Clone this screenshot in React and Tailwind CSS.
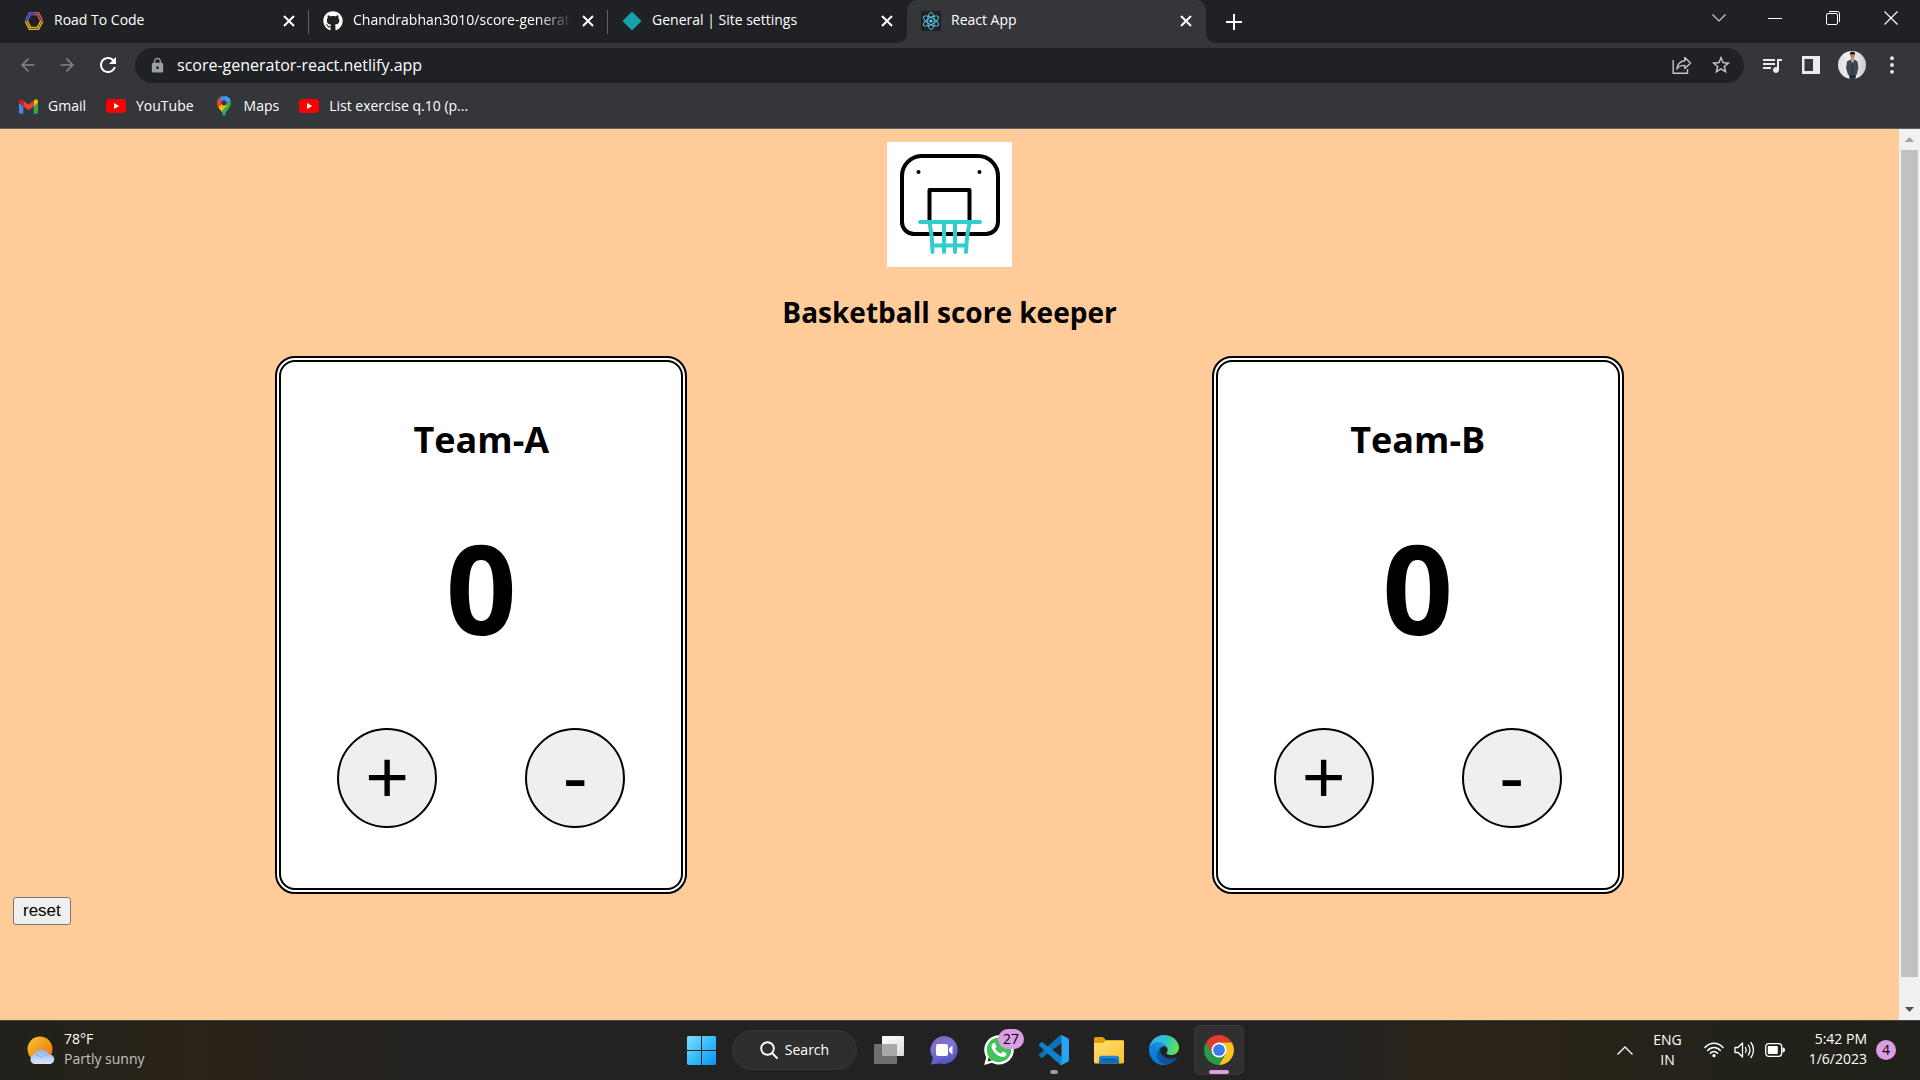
import { useState } from "react";
import { FaGithub, FaWhatsapp } from "react-icons/fa";
import { MdLock, MdRefresh, MdStarBorder, MdQueueMusic } from "react-icons/md";
import { ArrowLeft, ArrowRight } from "lucide-react";

/* ---------- site icons ---------- */

function HexagonIcon() {
  return (
    <svg viewBox="0 0 20 20" className="h-5 w-5" fill="none" strokeWidth="3.4">
      <path d="M2.2 10 6 2.6h6" stroke="#6a5acd" />
      <path d="M11 2.6h3L17.8 10" stroke="#e05a5a" />
      <path d="M17.8 10 14 17.4H6L2.2 10" stroke="#e8b52c" />
      <path d="M2.2 10 6 2.6h8L17.8 10 14 17.4H6z" stroke="#202124" strokeWidth="0.7" />
    </svg>
  );
}

function DiamondIcon() {
  return (
    <svg viewBox="0 0 20 20" className="h-5 w-5">
      <path d="M10 .5 19.5 10 10 19.5.5 10z" fill="#15a0ae" />
    </svg>
  );
}

function ReactIcon() {
  return (
    <svg viewBox="0 0 20 20" className="h-5 w-5" fill="none" stroke="#5fd3f3" strokeWidth="0.9">
      <rect width="20" height="20" rx="1.5" fill="#202124" stroke="none" />
      <ellipse cx="10" cy="10" rx="3.3" ry="8.6" />
      <ellipse cx="10" cy="10" rx="3.3" ry="8.6" transform="rotate(60 10 10)" />
      <ellipse cx="10" cy="10" rx="3.3" ry="8.6" transform="rotate(120 10 10)" />
      <circle cx="10" cy="10" r="1.6" fill="#5fd3f3" stroke="none" />
    </svg>
  );
}

function GmailIcon() {
  return (
    <svg viewBox="52 42 88 66" className="h-[15px] w-[19px]">
      <path fill="#4285f4" d="M58 108h14V74L52 59v43c0 3.32 2.69 6 6 6" />
      <path fill="#34a853" d="M120 108h14c3.32 0 6-2.69 6-6V59l-20 15" />
      <path fill="#fbbc04" d="M120 48v26l20-15v-8c0-7.42-8.47-11.65-14.4-7.2" />
      <path fill="#ea4335" d="M72 74V48l24 18 24-18v26L96 92" />
      <path fill="#c5221f" d="M52 51v8l20 15V48l-5.6-4.2c-5.94-4.45-14.4-.22-14.4 7.2" />
    </svg>
  );
}

function YouTubeIcon() {
  return (
    <svg viewBox="0 0 20 14" className="h-[14px] w-5">
      <rect width="20" height="14" rx="3.5" fill="#f00" />
      <path d="M8 4v6l5.2-3z" fill="#fff" />
    </svg>
  );
}

function MapsIcon() {
  return (
    <svg viewBox="-3 0 20 20" className="h-5 w-5">
      <defs>
        <clipPath id="pin">
          <path d="M7 0a7 7 0 0 1 7 7c0 5-4.6 6.600-5.800 11.600C8 19.600 7.600 20 7 20s-1-.4-1.200-1.400C4.600 13.600 0 12 0 7a7 7 0 0 1 7-7z" />
        </clipPath>
      </defs>
      <g clipPath="url(#pin)">
        <rect width="14" height="20" fill="#34a853" />
        <path d="M0 0h14v3L7 10 1.500 3z" fill="#4285f4" />
        <path d="M9 0h5v4L9.500 5z" fill="#4aa3f6" />
        <path d="M-1 1.500h3L7 6l-6 6.500-3-3z" fill="#ea4335" />
        <path d="M1 12.200 7 5.500l3 4-6.500 7z" fill="#fbbc04" />
      </g>
      <circle cx="7" cy="7" r="2.500" fill="#35363a" />
    </svg>
  );
}

function CloseIcon() {
  return (
    <svg viewBox="0 0 12 12" className="h-3 w-3" stroke="currentColor" strokeWidth="2">
      <path d="M1 1l10 10M11 1 1 11" />
    </svg>
  );
}

function ShareIcon() {
  return (
    <svg viewBox="0 0 20 20" className="h-5 w-5" fill="none" stroke="currentColor" strokeWidth="1.4">
      <path d="M1.200 5v13.300h14.300V14" />
      <path d="M12.800 2.500 18.500 8l-5.700 5.500V10.400C9 10.300 6.500 11.500 4.800 14 5.300 9.500 8 6.200 12.800 5.700z" strokeLinejoin="round" />
    </svg>
  );
}

function SidePanelIcon() {
  return (
    <svg viewBox="0 0 18 18" className="h-[18px] w-[18px]">
      <path fill="currentColor" fillRule="evenodd" d="M0 0h18v18H0zM2.500 3v12H11V3z" />
    </svg>
  );
}

function Avatar() {
  return (
    <svg viewBox="0 0 28 28" className="h-7 w-7">
      <defs>
        <clipPath id="face"><circle cx="14" cy="14" r="14" /></clipPath>
        <linearGradient id="wall"><stop stopColor="#e4dce4" /><stop offset="0.5" stopColor="#f6f0f6" /><stop offset="1" stopColor="#cfc4cf" /></linearGradient>
      </defs>
      <g clipPath="url(#face)">
        <rect width="28" height="28" fill="url(#wall)" />
        <path d="M11 23h7l-.5 6h-6z" fill="#26262c" />
        <path d="M9 10.500 12.500 8.500h4L19.500 10.500 20.500 17 19 22.500 18.500 24h-8.500L9.500 22 8 17z" fill="#3d4852" />
        <path d="M12.800 8.500h3.400L14.600 14z" fill="#b9b4a8" />
        <path d="M14.300 11v12" stroke="#20262c" strokeWidth="0.800" />
        <ellipse cx="14.500" cy="5.200" rx="2" ry="2.900" fill="#bb8466" />
        <path d="M12.200 5C11.500 1 13 .8 14.500.8s3.200.4 2.500 4.200L16.500 3.200h-3.700z" fill="#17130f" />
      </g>
    </svg>
  );
}

/* ---------- taskbar icons ---------- */

function WeatherIcon() {
  return (
    <svg viewBox="0 0 28 28" className="h-7 w-7">
      <defs>
        <linearGradient id="sun" x1="0" y1="0" x2="1" y2="1"><stop stopColor="#f7c62f" /><stop offset="1" stopColor="#ef6c0c" /></linearGradient>
        <linearGradient id="cloud" x1="0" y1="0" x2="0" y2="1"><stop stopColor="#8fb4ee" /><stop offset="1" stopColor="#dbe6fa" /></linearGradient>
      </defs>
      <circle cx="13" cy="13" r="12.500" fill="url(#sun)" />
      <path d="M7.500 28a4.800 4.800 0 0 1-.3-9.400 8 8 0 0 1 14.800 0A4.700 4.700 0 0 1 23 28z" fill="url(#cloud)" />
      <path d="M8 19c3 0 5 1 6 3M14 22c1.500-2.400 4-3.500 8-3.300" fill="none" stroke="#7fa5e6" strokeWidth="0.800" />
    </svg>
  );
}

function WindowsIcon() {
  return (
    <svg viewBox="0 0 29 29" className="h-[29px] w-[29px]">
      <defs>
        <linearGradient id="win" x1="0" y1="0" x2="29" y2="29" gradientUnits="userSpaceOnUse"><stop stopColor="#7fe0ff" /><stop offset="0.500" stopColor="#38bdf8" /><stop offset="1" stopColor="#0a93f5" /></linearGradient>
      </defs>
      <path d="M1 0h13v14H0V1zM15 0h13l1 1v13H15zM0 15h14v14H1l-1-1zM15 15h14v13l-1 1H15z" fill="url(#win)" />
    </svg>
  );
}

function SearchIcon() {
  return (
    <svg viewBox="0 0 18 18" className="h-[18px] w-[18px]" fill="none" stroke="#fff" strokeWidth="1.900">
      <circle cx="7.500" cy="7.500" r="6.300" />
      <path d="m12 12 5 5" strokeLinecap="round" />
    </svg>
  );
}

function TaskViewIcon() {
  return (
    <svg viewBox="0 0 30 28" className="h-7 w-[30px]">
      <defs>
        <linearGradient id="pane" x1="0" y1="0" x2="1" y2="1"><stop stopColor="#fff" /><stop offset="1" stopColor="#dcdcdc" /></linearGradient>
      </defs>
      <rect x="8" y="0" width="22" height="20" rx="1" fill="url(#pane)" />
      <rect x="0" y="8" width="23" height="20" rx="1" fill="#6e6e6e" />
      <path d="M8 8h15v12H9l-1-1z" fill="#a9a9a9" />
    </svg>
  );
}

function ChatIcon() {
  return (
    <svg viewBox="0 0 29 29" className="h-[29px] w-[29px]">
      <defs>
        <linearGradient id="chat" x1="0.200" y1="0" x2="0.600" y2="1"><stop stopColor="#8a62b5" /><stop offset="0.400" stopColor="#7a76d0" /><stop offset="1" stopColor="#5250c4" /></linearGradient>
      </defs>
      <path d="M14.500 0A14 14 0 1 1 10 27.500L.8 28.500 3 22A14 14 0 0 1 14.500 0z" fill="url(#chat)" />
      <rect x="6" y="8" width="12" height="12" rx="2" fill="#fff" />
      <path d="m19 12.500 3.500-3v9l-3.500-3z" fill="#fff" />
    </svg>
  );
}

function VsCodeIcon() {
  return (
    <svg viewBox="0 0 100 100" className="h-[30px] w-[30px]">
      <path fill="#0f70b8" d="M96.460 10.800 75.860.870a6.230 6.230 0 0 0-7.100 1.200L1.300 63.580a4.170 4.170 0 0 0 0 6.170l5.510 5a4.170 4.170 0 0 0 5.320.240L93.360 13.400c2.730-2.070 6.640-.130 6.640 3.300v-.240a6.250 6.250 0 0 0-3.540-5.660z" />
      <path fill="#0d82cc" d="m96.460 89.170-20.600 9.920a6.230 6.230 0 0 1-7.100-1.200L1.300 36.380a4.170 4.170 0 0 1 0-6.170l5.510-5a4.170 4.170 0 0 1 5.320-.240L93.360 86.600c2.730 2.070 6.640.130 6.640-3.300v.240a6.250 6.250 0 0 1-3.540 5.630z" />
      <path fill="#2aa3f2" d="M75.860 99.130a6.230 6.230 0 0 1-7.110-1.210c2.310 2.310 6.250.670 6.250-2.590V4.670c0-3.260-3.940-4.890-6.250-2.590a6.230 6.230 0 0 1 7.110-1.210l20.600 9.910A6.250 6.250 0 0 1 100 16.410v67.180a6.250 6.250 0 0 1-3.540 5.630z" />
    </svg>
  );
}

function FolderIcon() {
  return (
    <svg viewBox="0 0 30 27" className="h-[27px] w-[30px]">
      <defs>
        <linearGradient id="folder" x1="0" y1="0" x2="1" y2="1"><stop stopColor="#ffdf76" /><stop offset="1" stopColor="#fbc02a" /></linearGradient>
        <linearGradient id="tray" x1="0" y1="0" x2="0" y2="1"><stop stopColor="#1b90e0" /><stop offset="1" stopColor="#0c62ac" /></linearGradient>
      </defs>
      <path d="M0 1.500A1.500 1.500 0 0 1 1.500 0H9l3 3h16.500A1.500 1.500 0 0 1 30 4.500V9H0z" fill="#e0a106" />
      <path d="M0 6h9l3-2.200h18V25a1.500 1.500 0 0 1-1.500 1.500h-27A1.500 1.500 0 0 1 0 25z" fill="url(#folder)" />
      <path d="M5 26.500V21a2.200 2.200 0 0 1 2.200-2.200h15.600A2.200 2.200 0 0 1 25 21v5.500z" fill="url(#tray)" />
      <path d="M8.500 22.500h13" stroke="#0a4b8a" strokeWidth="1.200" />
    </svg>
  );
}

function EdgeIcon() {
  return (
    <svg viewBox="0 0 256 256" className="h-[30px] w-[30px]">
      <defs>
        <linearGradient id="edgeA" x1="0.200" y1="0.500" x2="1" y2="0.500"><stop stopColor="#0c59a4" /><stop offset="1" stopColor="#114a8b" /></linearGradient>
        <linearGradient id="edgeB" x1="0.800" y1="0" x2="0.300" y2="1"><stop stopColor="#1b9de2" /><stop offset="0.500" stopColor="#0c86da" /><stop offset="1" stopColor="#0078d4" /></linearGradient>
        <linearGradient id="edgeC" x1="0" y1="0.300" x2="1" y2="0.600"><stop stopColor="#35b1e8" /><stop offset="0.500" stopColor="#2fc2cf" /><stop offset="1" stopColor="#62e24e" /></linearGradient>
      </defs>
      <path fill="url(#edgeA)" d="M231 190.500c-3.400 1.800-6.900 3.400-10.500 4.700-11.500 4.300-23.600 6.500-35.900 6.500-47.300 0-88.500-32.500-88.500-74.300.1-11.400 6.400-21.900 16.400-27.300-42.800 1.800-53.800 46.400-53.800 72.500 0 73.900 68.100 81.400 82.800 81.400 7.900 0 19.800-2.300 27-4.600l1.300-.4c27.600-9.500 51-28.100 66.600-52.800 1.200-1.900.6-4.300-1.200-5.500-1.300-.8-2.900-.9-4.200-.2z" />
      <path fill="url(#edgeB)" d="M105.700 241.400c-8.900-5.500-16.600-12.800-22.700-21.300-26.300-36-18.400-86.500 17.600-112.800 3.800-2.700 7.700-5.200 11.900-7.200 3.100-1.500 8.400-4.100 15.500-4 10.100.1 19.600 4.900 25.700 13 4 5.400 6.300 11.900 6.400 18.700 0-.2 24.500-79.600-80-79.600-43.900 0-80 41.700-80 78.200-.2 19.300 4 38.500 12.100 56 27.600 58.800 94.800 87.600 156.400 67.100-21.100 6.600-44.100 3.700-62.900-8.100z" />
      <path fill="url(#edgeC)" d="M152.300 148.900c-.8 1-3.300 2.500-3.300 5.700 0 2.600 1.700 5.100 4.700 7.200 14.400 10 41.500 8.700 41.600 8.700 10.700 0 21.100-2.900 30.300-8.300 18.800-11 30.400-31.100 30.400-52.900.3-22.400-8-37.300-11.300-43.900C223.500 23.900 177.700 0 128 0 58 0 1 56.200 0 126.200c.5-36.500 36.800-66 80-66 3.500 0 23.500.3 42 10.100 16.300 8.600 24.900 18.900 30.800 29.200 6.200 10.700 7.300 24.100 7.300 29.500 0 5.300-2.700 13.300-7.800 19.900z" />
    </svg>
  );
}

function ChromeIcon() {
  return (
    <svg viewBox="-22 -22 44 44" className="h-[30px] w-[30px]">
      <path fill="#e33b2e" d="M-19.050-11A22 22 0 0 1 19.050-11H0L-9.530 5.500z" />
      <path fill="#fcc31e" d="M19.050-11A22 22 0 0 1 0 22L9.530 5.500 0-11z" />
      <path fill="#2a9a47" d="M0 22A22 22 0 0 1-19.050-11L-9.530 5.500H9.530z" />
      <circle r="11" fill="#fff" />
      <circle r="8.600" fill="#3b7ded" />
    </svg>
  );
}

function WifiIcon() {
  return (
    <svg viewBox="0 0 20 16" className="h-4 w-5" fill="none" stroke="#fff" strokeWidth="1.500" strokeLinecap="round">
      <path d="M1 5.500C6-.3 14-.3 19 5.500M3.700 8.500c3.500-4 9.100-4 12.600 0M6.400 11.300c2-2.400 5.200-2.400 7.200 0" />
      <circle cx="10" cy="13.700" r="1.600" fill="#fff" stroke="none" />
    </svg>
  );
}

function VolumeIcon() {
  return (
    <svg viewBox="0 0 21 18" className="h-[18px] w-[21px]" fill="none" stroke="#fff" strokeWidth="1.300" strokeLinecap="round" strokeLinejoin="round">
      <path d="M1 6.500h3L8.500 2v14L4 11.500H1z" />
      <path d="M11.500 6.500c1 1.600 1 3.400 0 5M14.300 4c2 3 2 7 0 10M17 1.500c3.300 4.500 3.300 10.500 0 15" />
    </svg>
  );
}

function BatteryIcon() {
  return (
    <svg viewBox="0 0 20 14" className="h-[14px] w-5">
      <rect x="0.700" y="0.700" width="16" height="12.600" rx="3" fill="none" stroke="#fff" strokeWidth="1.300" />
      <rect x="2.800" y="3" width="10" height="8" rx="1" fill="#fff" />
      <path d="M17.500 4.500c2 .3 2.500 1.200 2.500 2.500s-.5 2.200-2.500 2.500z" fill="#fff" />
    </svg>
  );
}

/* ---------- browser window ---------- */

const tabs = [
  { title: "Road To Code", icon: <HexagonIcon /> },
  { title: "Chandrabhan3010/score-generat", icon: <FaGithub className="h-5 w-5 text-white" />, fade: true },
  { title: "General | Site settings", icon: <DiamondIcon /> },
  { title: "React App", icon: <ReactIcon />, active: true },
];

function Flare({ className }) {
  return (
    <svg viewBox="0 0 10 10" className={`absolute bottom-0 h-[10px] w-[10px] ${className}`} fill="#35363a">
      <path d="M10 0v10H0A10 10 0 0 0 10 0z" />
    </svg>
  );
}

function Tab({ title, icon, fade, active, divider }) {
  return (
    <div
      className={`relative flex h-[43px] min-w-0 max-w-[299px] flex-1 items-center gap-[10px] pb-px pl-[14px] pr-[14px] text-white ${
        active ? "rounded-t-[10px] bg-[#35363a]" : ""
      }`}
    >
      {active && <Flare className="-left-[10px]" />}
      {active && <Flare className="-right-[10px] -scale-x-100" />}
      <span className="shrink-0">{icon}</span>
      <button
        className={`min-w-0 flex-1 overflow-hidden whitespace-nowrap pb-0.5 text-left text-[14px] leading-5 ${
          fade ? "[mask-image:linear-gradient(to_right,black_85%,transparent)]" : ""
        }`}
      >
        {title}
      </button>
      <button aria-label={`Close ${title}`} className="shrink-0">
        <CloseIcon />
      </button>
      {divider && <span className="absolute right-0 top-[10px] h-6 w-px bg-[#5f6368]" />}
    </div>
  );
}

function TabStrip() {
  return (
    <div className="flex h-[43px] bg-[#202124] pl-[10px] text-white">
      <div className="flex min-w-0 flex-1">
        {tabs.map((tab, i) => (
          <Tab key={tab.title} {...tab} divider={i < 2} />
        ))}
        <button aria-label="New tab" className="ml-5 shrink-0">
          <svg viewBox="0 0 16 16" className="h-4 w-4" stroke="currentColor" strokeWidth="2">
            <path d="M8 0v16M0 8h16" />
          </svg>
        </button>
      </div>
      <div className="flex h-9 shrink-0 items-center">
        <button aria-label="Search tabs" className="flex w-[54px] justify-center">
          <svg viewBox="0 0 14 8" className="h-2 w-[14px]" fill="none" stroke="#ccc" strokeWidth="1.200">
            <path d="m.5.5 6.500 6.500L13.500.5" />
          </svg>
        </button>
        <button aria-label="Minimize" className="flex w-[58px] justify-center">
          <svg viewBox="0 0 14 14" className="h-[14px] w-[14px]" stroke="#fff">
            <path d="M0 7.500h14" />
          </svg>
        </button>
        <button aria-label="Restore" className="flex w-[58px] justify-center">
          <svg viewBox="0 0 14 14" className="h-[14px] w-[14px]" fill="none" stroke="#fff">
            <rect x="0.500" y="2.500" width="11" height="11" rx="1.500" />
            <path d="M3 .5h8.500a2 2 0 0 1 2 2V11" />
          </svg>
        </button>
        <button aria-label="Close window" className="flex w-[58px] justify-center">
          <svg viewBox="0 0 14 14" className="h-[14px] w-[14px]" stroke="#fff" strokeWidth="1.200">
            <path d="m.5.5 13 13M13.500.5l-13 13" />
          </svg>
        </button>
      </div>
    </div>
  );
}

function Toolbar() {
  return (
    <div className="flex h-11 items-center bg-[#35363a] pr-5">
      <div className="flex w-[135px] items-center gap-[19px] pl-[18px] text-[#85868a]">
        <button aria-label="Back"><ArrowLeft className="h-5 w-5" strokeWidth={1.9} /></button>
        <button aria-label="Forward"><ArrowRight className="h-5 w-5" strokeWidth={1.9} /></button>
        <button aria-label="Reload" className="text-white"><MdRefresh className="h-6 w-6" /></button>
      </div>
      <div className="flex h-[35px] flex-1 items-center rounded-full bg-[#202124] pl-[14px] pr-3 text-[#c4c5c8]">
        <MdLock className="h-[17px] w-[17px] text-[#9aa0a6]" />
        <input
          aria-label="Address"
          className="ml-[11px] min-w-0 flex-1 bg-transparent text-[16px] leading-6 text-white outline-none"
          defaultValue="score-generator-react.netlify.app"
        />
        <button aria-label="Share"><ShareIcon /></button>
        <button aria-label="Bookmark this page" className="ml-[18px]"><MdStarBorder className="h-[22px] w-[22px]" /></button>
      </div>
      <div className="flex items-center gap-[18px] pl-4 text-[#eaeaec]">
        <button aria-label="Media controls"><MdQueueMusic className="h-6 w-6" /></button>
        <button aria-label="Side panel"><SidePanelIcon /></button>
        <button aria-label="Profile"><Avatar /></button>
        <button aria-label="Menu" className="px-[6px]">
          <svg viewBox="0 0 4 18" className="h-[18px] w-1" fill="currentColor">
            <circle cx="2" cy="2.200" r="1.900" /><circle cx="2" cy="9" r="1.900" /><circle cx="2" cy="15.800" r="1.900" />
          </svg>
        </button>
      </div>
    </div>
  );
}

function Bookmarks() {
  const item = "flex items-center gap-[10px]";
  return (
    <nav className="flex h-[42px] items-center gap-5 border-b border-[#5f6064] bg-[#35363a] pb-[3px] pl-[19px] text-[14px] leading-5 text-white">
      <a href="#gmail" className={item}><GmailIcon />Gmail</a>
      <a href="#youtube" className={item}><YouTubeIcon />YouTube</a>
      <a href="#maps" className={item}><MapsIcon />Maps</a>
      <a href="#list" className={item}><YouTubeIcon />List exercise q.10 (p...</a>
    </nav>
  );
}

/* ---------- page ---------- */

function HoopLogo() {
  return (
    <svg viewBox="0 0 125 125" className="h-[125px] w-[125px] bg-white" fill="none" strokeWidth="4" strokeLinecap="round" strokeLinejoin="round">
      <path stroke="#000" d="M34 14h57a20 20 0 0 1 20 20v46a12 12 0 0 1-12 12H27a12 12 0 0 1-12-12V34a20 20 0 0 1 19-20z" />
      <path stroke="#000" d="M42.500 78V48h40v30" />
      <circle cx="31.500" cy="30" r="2" fill="#000" />
      <circle cx="92.500" cy="30" r="2" fill="#000" />
      <path stroke="#32cdcd" d="M33 80h60M42.500 80c2 10 3 18 3 30M83 80c-3 10-3.500 18-4 30M57 80v30M68 80v30M46 103.500h33" />
    </svg>
  );
}

function TeamCard({ name, score, onChange }) {
  const round =
    "flex h-[100px] w-[100px] items-center justify-center rounded-full border-2 border-black bg-[#efefef] pb-0.5 font-['Liberation_Sans',sans-serif] text-[75px] leading-none";
  return (
    <section className="flex w-[412px] flex-col items-center rounded-[20px] border-[6px] border-double border-black bg-white pb-[60px] pt-[52px] text-black">
      <h2 className="text-[36px] font-bold leading-[52px]">{name}</h2>
      <output className="mt-[46px] block text-[124px] font-bold leading-[150px]">{score}</output>
      <div className="mt-[66px] flex gap-[88px]">
        <button aria-label={`Add a point to ${name}`} className={round} onClick={() => onChange(score + 1)}>+</button>
        <button aria-label={`Take a point from ${name}`} className={round} onClick={() => onChange(Math.max(0, score - 1))}>-</button>
      </div>
    </section>
  );
}

function ScorePage() {
  const [a, setA] = useState(0);
  const [b, setB] = useState(0);
  return (
    <main className="flex-1 bg-[#ffcb99] px-[13px] pt-[13px]">
      <div className="flex flex-col items-center">
        <HoopLogo />
        <h1 className="mt-6 text-[28px] font-bold leading-[42px] text-black">Basketball score keeper</h1>
      </div>
      <div className="mt-[23px] flex justify-around">
        <TeamCard name="Team-A" score={a} onChange={setA} />
        <TeamCard name="Team-B" score={b} onChange={setB} />
      </div>
      <button
        className="mt-[3px] block h-7 rounded-[3px] border border-[#767676] bg-[#efefef] px-[9px] font-['Liberation_Sans',sans-serif] text-[17px] leading-6 text-black"
        onClick={() => { setA(0); setB(0); }}
      >
        reset
      </button>
    </main>
  );
}

function Scrollbar() {
  return (
    <div className="flex w-[21px] flex-col items-center bg-[#f1f1f1]">
      <svg viewBox="0 0 9 5" className="my-2 h-[5px] w-[9px]"><path d="M4.500 0 9 5H0z" fill="#a3a3a3" /></svg>
      <div className="w-[17px] flex-1 bg-[#c1c1c1]" />
      <svg viewBox="0 0 9 5" className="mb-2 mt-[30px] h-[5px] w-[9px]"><path d="M0 0h9L4.500 5z" fill="#505050" /></svg>
    </div>
  );
}

/* ---------- taskbar ---------- */

function Taskbar() {
  const slot = "relative flex h-[50px] w-[50px] items-center justify-center";
  return (
    <footer className="grid h-[60px] grid-cols-[1fr_auto_1fr] items-center border-t border-[#45453f] bg-[linear-gradient(to_right,#20221b,#2b2218_10%,#222_24%,#222_68%,#2c2318_76%,#23221a_90%,#20211a)] pb-px text-[14px] leading-5 text-white">
      <button className="flex items-center gap-[9px] justify-self-start pl-[27px] text-left">
        <WeatherIcon />
        <span className="flex flex-col pb-0.5">
          <span>78°F</span>
          <span className="text-[#c4c4c0]">Partly sunny</span>
        </span>
      </button>
      <div className="flex items-center gap-[5px]">
        <button aria-label="Start" className={slot}><WindowsIcon /></button>
        <button className="ml-px mr-[2px] flex h-10 w-[125px] items-center justify-center gap-[7px] rounded-full border border-[#383838] bg-[#2e2e2e]">
          <SearchIcon />
          Search
        </button>
        <button aria-label="Task view" className={slot}><TaskViewIcon /></button>
        <button aria-label="Chat" className={slot}><ChatIcon /></button>
        <button aria-label="WhatsApp" className={slot}>
          <span className="flex h-[30px] w-[30px] items-center justify-center rounded-full bg-[radial-gradient(circle,#3fc35a_60%,transparent_62%)]">
            <FaWhatsapp className="h-[34px] w-[34px] shrink-0 text-white" />
          </span>
          <span className="absolute right-0 top-1 flex h-5 w-[26px] items-center justify-center rounded-full bg-[#dc9ee2] text-black">27</span>
        </button>
        <button aria-label="Visual Studio Code" className={slot}>
          <VsCodeIcon />
          <span className="absolute bottom-px h-1 w-2 rounded-full bg-[#9a9a9a]" />
        </button>
        <button aria-label="File Explorer" className={slot}><FolderIcon /></button>
        <button aria-label="Microsoft Edge" className={slot}><EdgeIcon /></button>
        <button aria-label="Google Chrome" className={`${slot} rounded-md border border-[#3a3a3a] bg-[#303030]`}>
          <ChromeIcon />
          <span className="absolute bottom-0 h-1 w-5 rounded-full bg-[#dc9ee2]" />
        </button>
      </div>
      <div className="flex items-center justify-self-end pr-6">
        <button aria-label="Hidden icons">
          <svg viewBox="0 0 16 9" className="h-[9px] w-4" fill="none" stroke="#fff" strokeWidth="1.300">
            <path d="m.5 8.500 7.500-7.500 7.500 7.500" />
          </svg>
        </button>
        <button className="ml-5 flex flex-col items-center"><span>ENG</span><span>IN</span></button>
        <button aria-label="Network, volume and battery" className="ml-[22px] flex items-center gap-[10px]">
          <WifiIcon /><VolumeIcon /><BatteryIcon />
        </button>
        <button className="ml-6 flex flex-col items-end pb-0.5"><span>5:42 PM</span><span>1/6/2023</span></button>
        <span className="ml-[9px] flex h-5 w-5 items-center justify-center rounded-full bg-[#dc9ee2] text-[14px] text-black">4</span>
      </div>
    </footer>
  );
}

export default function App() {
  return (
    <div className="flex min-h-screen flex-col font-['Open_Sans','Noto_Sans',sans-serif]">
      <TabStrip />
      <Toolbar />
      <Bookmarks />
      <div className="flex flex-1">
        <ScorePage />
        <Scrollbar />
      </div>
      <Taskbar />
    </div>
  );
}
